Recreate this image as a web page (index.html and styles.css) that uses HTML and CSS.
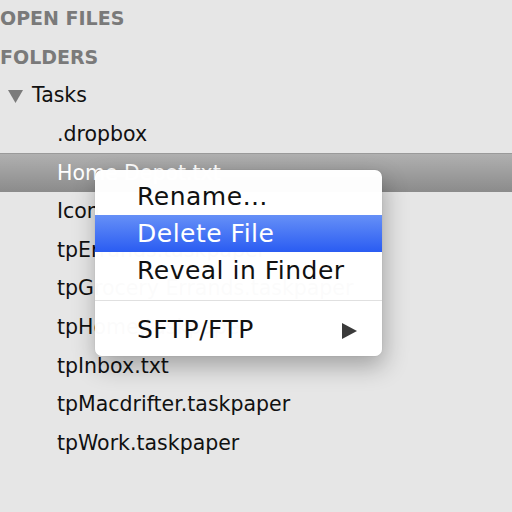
FILE: index.html
```html
<!DOCTYPE html>
<html>
<head>
<meta charset="utf-8">
<link rel="stylesheet" href="styles.css">
</head>
<body>
<div class="sidebar">
  <div class="row header">OPEN FILES</div>
  <div class="row header">FOLDERS</div>
  <div class="row folder"><svg class="disclosure" width="15" height="13" viewBox="0 0 15 13"><polygon points="0,0 15,0 7.5,13" fill="#7b7b7b"/></svg><span>Tasks</span></div>
  <div class="row file">.dropbox</div>
  <div class="row file selected">Home Depot.txt</div>
  <div class="row file">Icon</div>
  <div class="row file">tpErrands.taskpaper</div>
  <div class="row file">tpGrocery Errands.taskpaper</div>
  <div class="row file">tpHome.taskpaper</div>
  <div class="row file">tpInbox.txt</div>
  <div class="row file">tpMacdrifter.taskpaper</div>
  <div class="row file">tpWork.taskpaper</div>
</div>
<div class="menu">
  <div class="item">Rename…</div>
  <div class="item active">Delete File</div>
  <div class="item">Reveal in Finder</div>
  <div class="sep"></div>
  <div class="item sub"><span>SFTP/FTP</span><svg class="arrow" width="15" height="16" viewBox="0 0 15 16"><polygon points="0,0 15,8 0,16" fill="#3a3a3a"/></svg></div>
</div>
</body>
</html>
```
FILE: styles.css
```css
html, body {
  margin: 0;
  padding: 0;
  background: #e6e6e6;
  width: 512px;
  height: 512px;
  overflow: hidden;
}
body {
  font-family: "DejaVu Sans", "Liberation Sans", sans-serif;
  position: relative;
}
.sidebar {
  margin-top: -1.4px;
  display: flex;
  flex-direction: column;
}
.row {
  height: 38.64px;
  display: flex;
  align-items: center;
  font-size: 20.5px;
  color: #111;
  white-space: nowrap;
  box-sizing: border-box;
}
.header {
  font-weight: bold;
  color: #7a7a7a;
  padding-left: 0;
  font-size: 19px;
}
.folder {
  padding-left: 8px;
}
.folder .disclosure {
  margin-right: 9px;
  margin-top: 2px;
}
.file {
  padding-left: 57px;
}
.selected {
  color: #fff;
  background: linear-gradient(#b0b0b0, #8b8b8b);
  border-top: 1px solid #9a9a9a;
}
.menu {
  position: absolute;
  left: 95px;
  top: 170px;
  width: 287px;
  height: 186px;
  box-sizing: border-box;
  background: rgba(255, 255, 255, 0.985);
  border-radius: 7px;
  padding: 8px 0;
  box-shadow: 2px 10px 24px rgba(0,0,0,0.3), 0 0 1px rgba(0,0,0,0.25);
  font-size: 25px;
  letter-spacing: 0.5px;
  color: #111;
}
.item {
  height: 37px;
  display: flex;
  align-items: center;
  padding-left: 42px;
  padding-right: 25px;
  white-space: nowrap;
}
.active {
  color: #fff;
  background: linear-gradient(#6690f7, #2a5cf2);
}
.sep {
  height: 1px;
  background: #e0e0e0;
  margin: 11px 0 10px;
}
.sub {
  justify-content: space-between;
}
.arrow {
  margin-top: 2px;
}
```
